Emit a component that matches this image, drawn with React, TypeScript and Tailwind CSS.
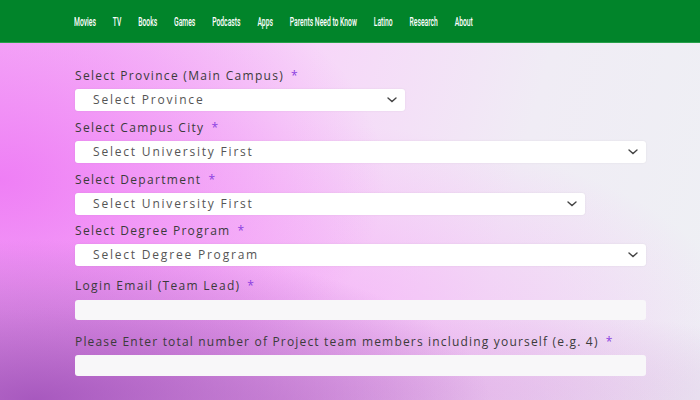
import React from "react";

const navItems = ["Movies", "TV", "Books", "Games", "Podcasts", "Apps", "Parents Need to Know", "Latino", "Research", "About"];

function Chevron() {
  return (
    <svg width="10" height="6" viewBox="0 0 10 6" className="shrink-0">
      <path d="M1 1l4 3.5L9 1" fill="none" stroke="#444" strokeWidth="1.4" strokeLinecap="round" />
    </svg>
  );
}

function Label({ text, className = "tracking-[1.3px]" }: { text: string; className?: string }) {
  return (
    <div className={"h-4 flex items-center text-[12px] text-[#3b3b3b] " + className}>
      <span>{text}</span>
      <span className="ml-[7px] text-[#8b3fe0]">*</span>
    </div>
  );
}

function Select({ text, width, className = "" }: { text: string; width: string; className?: string }) {
  return (
    <div className={"h-[22px] bg-white rounded-[3px] flex items-center justify-between pl-[18px] pr-[8px] shadow-[0_0_2px_rgba(0,0,0,0.08)] " + width + " " + className}>
      <span className="text-[12px] tracking-[1.8px] text-[#555]">{text}</span>
      <Chevron />
    </div>
  );
}

export default function App() {
  return (
    <div className="w-[700px] h-[400px] overflow-hidden font-['Open_Sans',sans-serif] bg-[radial-gradient(ellipse_65%_40%_at_5%_100%,rgba(160,80,185,0.9),transparent),radial-gradient(ellipse_90%_25%_at_40%_100%,rgba(200,120,210,0.45),transparent),radial-gradient(ellipse_55%_60%_at_0%_45%,rgba(238,120,245,0.9),transparent),radial-gradient(ellipse_70%_50%_at_35%_80%,rgba(246,170,248,0.8),transparent),linear-gradient(105deg,#f6b8f8_0%,#f7d6f9_40%,#f0ecf5_70%,#eef0f4_100%)]">
      <header className="h-[43px] bg-[#01842a] border-b border-[#27a04a] flex items-center pl-[74px] pt-[2px]">
        <nav className="flex gap-[32.5px] origin-left scale-x-[0.52] font-['Roboto',sans-serif] font-medium text-[13px] text-white whitespace-nowrap">
          {navItems.map((n) => (
            <span key={n}>{n}</span>
          ))}
        </nav>
      </header>
      <main className="pl-[75px] pt-[25px] flex flex-col">
        <Label text="Select Province (Main Campus)" />
        <Select text="Select Province" width="w-[330px]" className="mt-[5px]" />
        <Label text="Select Campus City" className="mt-[9px] tracking-[1.3px]" />
        <Select text="Select University First" width="w-[571px]" className="mt-[5px]" />
        <Label text="Select Department" className="mt-[9px] tracking-[1.3px]" />
        <Select text="Select University First" width="w-[510px]" className="mt-[5px]" />
        <Label text="Select Degree Program" className="mt-[8px] tracking-[1.3px]" />
        <Select text="Select Degree Program" width="w-[571px]" className="mt-[5px]" />
        <Label text="Login Email (Team Lead)" className="mt-[12px] tracking-[1.3px]" />
        <div className="mt-[6px] w-[571px] h-[20px] rounded-[3px] bg-[#f8f7f9]" />
        <Label text="Please Enter total number of Project team members including yourself (e.g. 4)" className="mt-[14px] tracking-[1.18px]" />
        <div className="mt-[5px] w-[571px] h-[21px] rounded-[3px] bg-[#f8f7f9]" />
      </main>
    </div>
  );
}
